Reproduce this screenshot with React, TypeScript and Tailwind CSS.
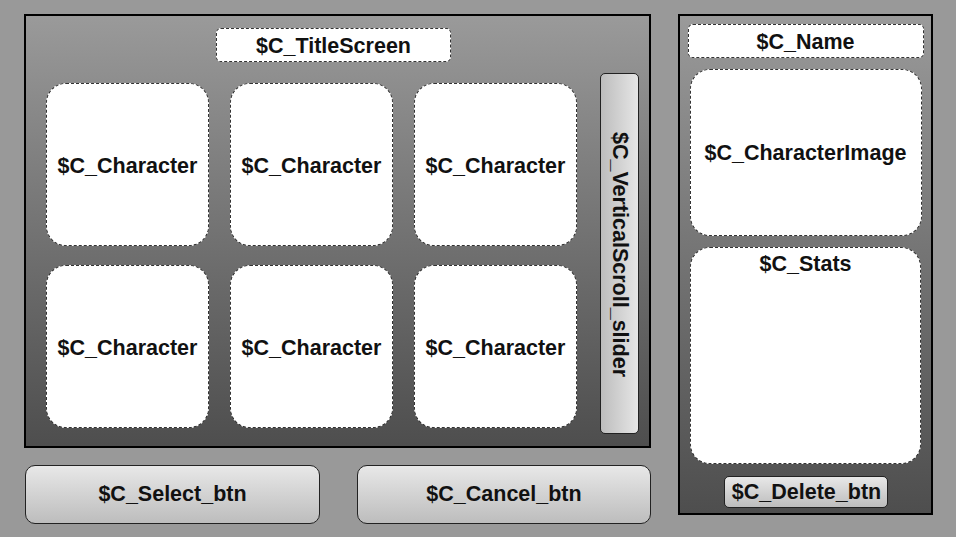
const font = { fontFamily: '"Liberation Sans", Arial, sans-serif' };

const Card = ({ label }: { label: string }) => (
  <div className="flex h-[163px] w-[163px] items-center justify-center rounded-[20px] border border-dashed border-[#333] bg-white pt-[3px] text-[21.5px] font-bold text-[#111]">
    {label}
  </div>
);

const App = () => {
  const cards = Array.from({ length: 6 }, (_, i) => i);

  return (
    <div className="flex h-[537px] w-[956px] overflow-hidden bg-[#999999] pl-[24px] pt-[14px]" style={font}>
      {/* Left column */}
      <div className="flex w-[627px] flex-col">
        <div className="flex h-[434px] border-2 border-black bg-gradient-to-b from-[#9a9a9a] to-[#4e4e4e]">
          <div className="flex flex-col pl-[20px] pt-[12px]">
            <div className="ml-[170px] flex h-[34px] w-[235px] items-center justify-center rounded-[5px] border border-dashed border-[#333] bg-white pt-[2px] text-[21.5px] font-bold text-[#111]">
              $C_TitleScreen
            </div>
            <div className="mt-[21px] grid grid-cols-[163px_163px_163px] gap-x-[21px] gap-y-[19px]">
              {cards.map((i) => (
                <Card key={i} label="$C_Character" />
              ))}
            </div>
          </div>
          <div className="ml-[23px] mt-[57px] flex h-[361px] w-[39px] items-center justify-center rounded-[5px] border border-[#222] bg-gradient-to-r from-[#bdbdbd] to-[#e6e6e6] pt-[3px]">
            <span className="text-[21.5px] font-bold text-[#111] [writing-mode:vertical-rl]">
              $C_VerticalScroll_slider
            </span>
          </div>
        </div>
        <div className="mt-[17px] flex gap-[37px] pl-[1px]">
          <div className="flex h-[59px] w-[295px] items-center justify-center rounded-[10px] border border-[#222] bg-gradient-to-b from-[#e8e8e8] to-[#bdbdbd] text-[21.5px] font-bold text-[#111]">
            $C_Select_btn
          </div>
          <div className="flex h-[59px] w-[294px] items-center justify-center rounded-[10px] border border-[#222] bg-gradient-to-b from-[#e8e8e8] to-[#bdbdbd] text-[21.5px] font-bold text-[#111]">
            $C_Cancel_btn
          </div>
        </div>
      </div>

      {/* Right panel */}
      <div className="ml-[27px] flex h-[501px] w-[255px] flex-col items-center border-2 border-black bg-gradient-to-b from-[#9a9a9a] to-[#4e4e4e] pt-[8px]">
        <div className="flex h-[34px] w-[236px] items-center justify-center rounded-[5px] border border-dashed border-[#333] bg-white pt-[2px] text-[21.5px] font-bold text-[#111]">
          $C_Name
        </div>
        <div className="mt-[11px] flex h-[167px] w-[232px] items-center justify-center rounded-[20px] border border-dashed border-[#333] bg-white pt-[2px] text-[21.5px] font-bold text-[#111]">
          $C_CharacterImage
        </div>
        <div className="mt-[11px] flex h-[217px] w-[231px] justify-center rounded-[20px] border border-dashed border-[#333] bg-white pt-[1px] text-[21.5px] font-bold leading-[30px] text-[#111]">
          $C_Stats
        </div>
        <div className="mt-[12px] flex h-[32px] w-[164px] items-center justify-center rounded-[5px] border border-[#222] bg-gradient-to-b from-[#e8e8e8] to-[#bdbdbd] pl-[2px] text-[21.5px] font-bold text-[#111]">
          $C_Delete_btn
        </div>
      </div>
    </div>
  );
};

export default App;
